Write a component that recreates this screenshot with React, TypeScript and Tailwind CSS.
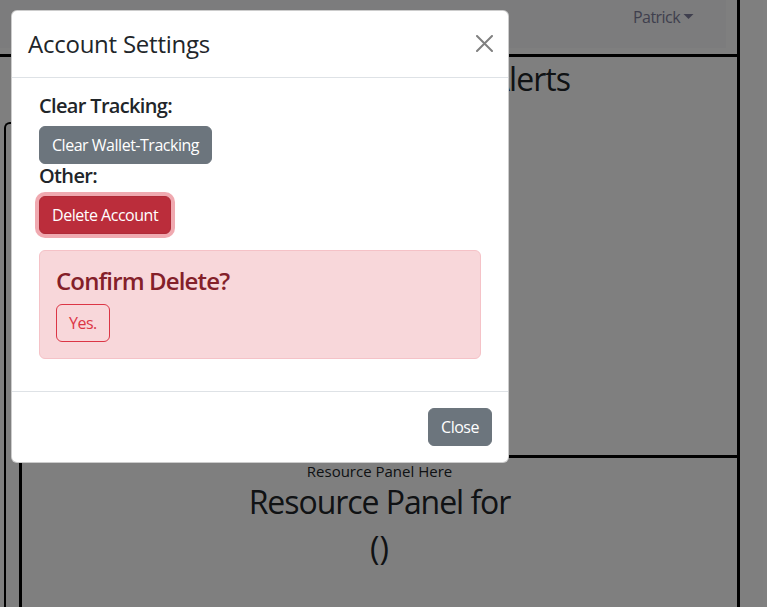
import React from 'react';

const font = { fontFamily: '"Segoe UI", "Open Sans", "Noto Sans", sans-serif' };

export default function App() {
    return (
        <div className="relative w-[767px] h-[607px] overflow-hidden bg-white text-[#212529]" style={font}>
            {/* Page behind the modal */}
            <div className="w-[740px] h-full border-r-[3px] border-black flex flex-col">
                {/* Navbar */}
                <div className="w-[726px] h-[48px] shrink-0 bg-[#f8f9fa] flex justify-end pr-[32px] pt-[5px]">
                    <div className="flex items-center gap-[3px] h-[24px] text-base tracking-[-0.035em] text-[#7f7f9c]">
                        <span>Patrick</span>
                        <svg width="11" height="6" viewBox="0 0 11 6">
                            <polygon points="0.5,0 10.5,0 5.5,5" fill="currentColor" />
                        </svg>
                    </div>
                </div>
                <div className="h-[6px] shrink-0" />

                {/* Main area */}
                <div className="flex-1 flex border-t-[3px] border-black">
                    <div className="w-[15px] ml-[4px] mt-[65px] border-l-2 border-t-2 border-black rounded-tl-md" />
                    <div className="flex-1 flex flex-col">
                        {/* Alerts panel */}
                        <div className="h-[398px] shrink-0 pt-[3px] text-right pr-[167px]">
                            <h2 className="text-[32px] font-medium leading-[1.2] tracking-[-0.03em]">Alerts</h2>
                        </div>
                        {/* Resource panel */}
                        <div className="flex-1 border-t-[3px] border-l-[3px] border-black text-center pt-[1px]">
                            <p className="text-[15px] leading-[24px]">Resource Panel Here</p>
                            <h2 className="text-[32px] font-medium leading-[1.2] tracking-[-0.033em] mb-2">Resource Panel for</h2>
                            <h2 className="text-[32px] font-medium leading-[1.2]">()</h2>
                        </div>
                    </div>
                </div>
            </div>

            {/* Backdrop */}
            <div className="absolute inset-0 bg-black/50" />

            {/* Modal */}
            <div className="absolute left-[11px] top-[10px] w-[498px] bg-white border border-black/20 rounded-[6px] flex flex-col">
                <div className="flex items-center justify-between p-4 border-b border-[#dee2e6]">
                    <h4 className="text-[24px] font-medium leading-[34px] tracking-[-0.01em]">Account Settings</h4>
                    <button className="w-[24px] h-[24px] flex items-center justify-center mr-[-4px] mt-[-2px]">
                        <svg width="17" height="17" viewBox="0 0 17 17">
                            <path d="M1 1 L16 16 M16 1 L1 16" stroke="#808080" strokeWidth="2" strokeLinecap="round" />
                        </svg>
                    </button>
                </div>

                <div className="p-4">
                    <div className="px-[11px]">
                        <h5 className="text-[20px] font-semibold leading-[1.2] tracking-[-0.033em] mb-2">Clear Tracking:</h5>
                        <button className="px-3 py-1.5 text-base leading-6 tracking-[-0.03em] text-white bg-[#6c757d] border border-[#6c757d] rounded-[6px]">
                            Clear Wallet-Tracking
                        </button>
                        <h5 className="text-[20px] font-semibold leading-[1.2] tracking-[-0.033em] mb-2">Other:</h5>
                        <button className="px-3 py-1.5 text-base leading-6 tracking-[-0.03em] text-white bg-[#bb2d3b] border border-[#b02a37] rounded-[6px] shadow-[0_0_0_4px_rgba(225,83,97,0.5)]">
                            Delete Account
                        </button>

                        <div className="mt-4 mb-4 p-4 bg-[#f8d7da] border border-[#f5c2c7] rounded-[6px]">
                            <h4 className="text-[24px] font-semibold leading-[1.2] tracking-[-0.036em] text-[#842029] mb-2">Confirm Delete?</h4>
                            <button className="px-3 py-1.5 text-base leading-6 tracking-[-0.03em] text-[#dc3545] border border-[#dc3545] rounded-[6px]">
                                Yes.
                            </button>
                        </div>
                    </div>
                </div>

                <div className="flex justify-end p-3 border-t border-[#dee2e6]">
                    <button className="m-1 px-3 py-1.5 text-base leading-6 tracking-[-0.03em] text-white bg-[#6c757d] border border-[#6c757d] rounded-[6px]">
                        Close
                    </button>
                </div>
            </div>
        </div>
    );
}
